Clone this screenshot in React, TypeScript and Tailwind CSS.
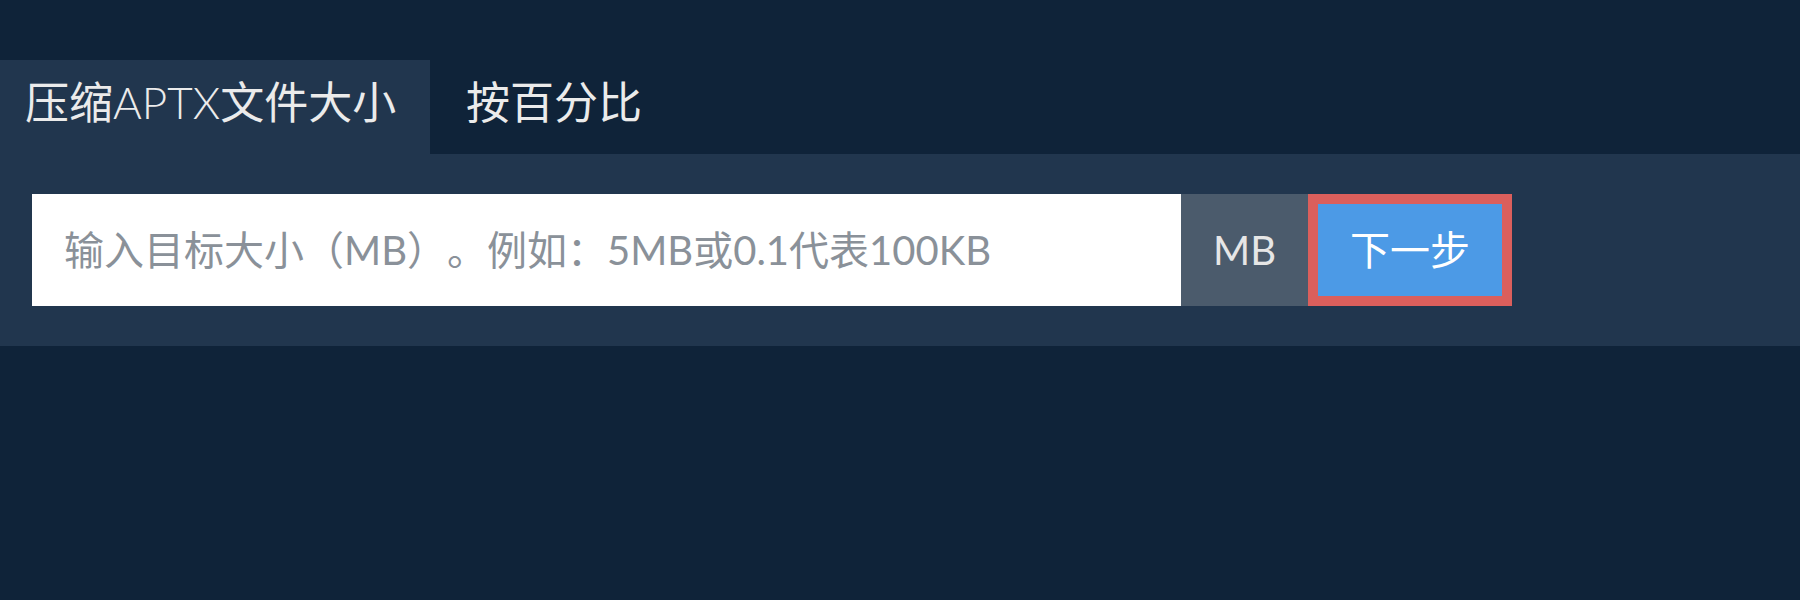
import { useState } from "react";

const fontStack = "font-['Lato','Noto_Sans_CJK_SC',sans-serif]";

export default function App() {
  const [tab, setTab] = useState(0);
  const [value, setValue] = useState("");

  return (
    <div className={`min-h-[600px] w-full bg-[#0f2339] pt-[60px] ${fontStack}`}>
      <div className="flex">
        <button
          onClick={() => setTab(0)}
          className={`h-[94px] w-[430px] pl-[25px] pb-[10px] text-left text-[44px] text-[#ebebeb] ${
            tab === 0 ? "bg-[#21364e]" : "bg-transparent"
          }`}
        >
          压缩<span className="font-light">APTX</span>文件大小
        </button>
        <button
          onClick={() => setTab(1)}
          className={`h-[94px] px-[36px] pb-[10px] text-[44px] text-[#ebebeb] ${
            tab === 1 ? "bg-[#21364e]" : "bg-transparent"
          }`}
        >
          按百分比
        </button>
      </div>

      <div className="bg-[#21364e] px-[32px] py-[40px]">
        <div className="flex h-[112px]">
          <input
            value={value}
            onChange={(e) => setValue(e.target.value)}
            placeholder="输入目标大小（MB）。例如：5MB或0.1代表100KB"
            className="h-full w-[1149px] bg-white px-[32px] text-[40px] text-[#333] outline-none [text-spacing-trim:space-all] placeholder:text-[#8a9199]"
          />
          <div className="flex h-full w-[127px] items-center justify-center bg-[#4b5b6c] text-[40px] text-[#e6e6e6]">
            MB
          </div>
          <button className="flex h-full w-[204px] items-center justify-center border-[10px] border-[#db5f5c] bg-[#4c9ae6] text-[40px] text-white">
            下一步
          </button>
        </div>
      </div>
    </div>
  );
}
